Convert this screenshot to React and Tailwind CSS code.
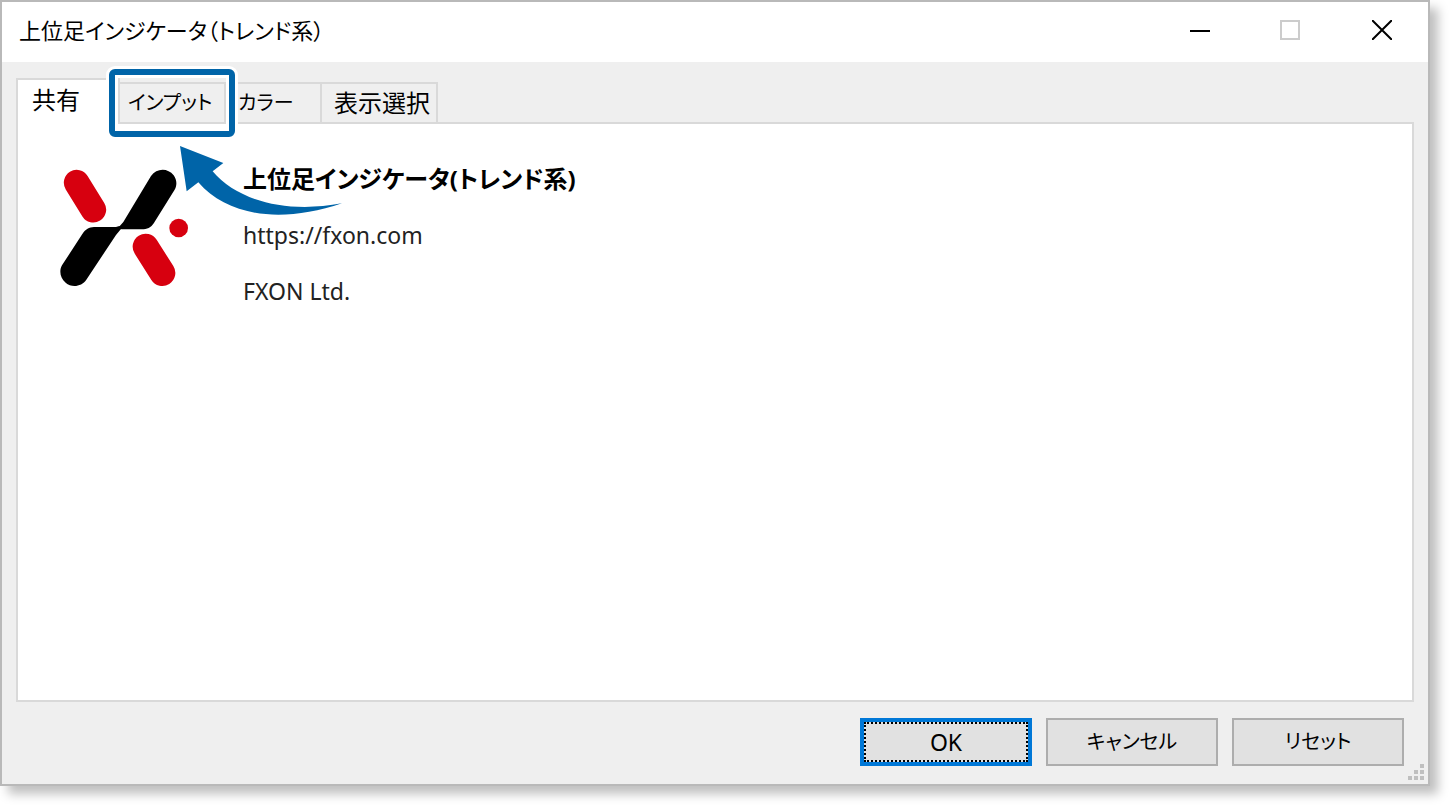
import React, { useState } from "react";
import clsx from "clsx";

const tabs = [
  { id: "common", label: "共有", style: "w-[104px] pl-[14px] text-2xl border-l-2" },
  { id: "inputs", label: "インプット", style: "w-[106px] pl-2 text-xl", highlight: true },
  { id: "colors", label: "カラー", style: "w-24 pl-3 text-xl" },
  { id: "display", label: "表示選択", style: "w-[116px] pl-3 text-2xl" },
];

const Logo = () => (
  <svg width="130" height="118" viewBox="60 117 390 354" aria-hidden="true">
    <g stroke="#d7000f" strokeLinecap="round">
      <path d="M110 158 L160 239" strokeWidth="77" />
      <path d="M317 350 L367 429" strokeWidth="78" />
    </g>
    <circle cx="416" cy="294" r="28" fill="#d7000f" />
    {/* Upper and lower arm, meeting in a thin twist in the middle */}
    <path d="M333 138 C350 114 383 113 401 136 C412 151 411 168 403 181 L345 274 C337 289 326 297 311 298 L246 298 L232 296 L250 276 Z" />
    <path d="M246 293 L228 315 L139 449 C125 470 95 474 77 458 C60 443 57 422 66 406 L127 312 C137 297 147 292 162 291 L228 291 L238 288 Z" />
  </svg>
);

// Tutorial marker: a rounded frame round the tab and the arrow that points at it
const Callout = () => (
  <>
    <span className="pointer-events-none absolute -top-[15px] -left-[11px] z-10 h-[68px] w-[126px] rounded-md border-[6px] border-[#0064a8] shadow-[0_0_0_3px_#fff,inset_0_0_0_3px_#fff]" />
    <svg
      className="pointer-events-none absolute top-[62px] left-[60px] z-10"
      width="162"
      height="69"
      viewBox="420 48 486 207"
      aria-hidden="true"
    >
      <path
        d="M420 48 L550 99 L518 124 C590 210 735 252 906 220 C725 281 564 260 475 157 L440 184 Z"
        fill="#0064a8"
      />
    </svg>
  </>
);

const TitleBar = () => (
  <header className="flex h-[60px] items-center justify-between bg-white">
    <h1 className="pl-[17px] pb-1 text-[22px]">上位足インジケータ（トレンド系）</h1>
    <div className="flex self-stretch pb-1">
      <button type="button" aria-label="最小化" className="flex w-[92px] items-center justify-center">
        <svg width="24" height="20" viewBox="0 0 24 20">
          <path d="M4 11 H24" stroke="#000" strokeWidth="2" />
        </svg>
      </button>
      <button type="button" aria-label="最大化" disabled className="flex w-[92px] items-center justify-center">
        <span className="size-5 border-2 border-[#ccc]" />
      </button>
      <button type="button" aria-label="閉じる" className="flex w-[92px] items-center justify-center">
        <svg width="20" height="20" viewBox="0 0 20 20">
          <path d="M0 0 L20 20 M20 0 L0 20" stroke="#000" strokeWidth="2" />
        </svg>
      </button>
    </div>
  </header>
);

const DialogButton = ({ children, primary }) => (
  <button
    type="button"
    className={clsx(
      "h-12 w-[172px] bg-[#e1e1e1]",
      primary ? "border-4 border-[#0078d7] text-[23px]" : "border-2 border-[#adadad] text-xl"
    )}
  >
    {primary ? (
      <span className="flex h-full items-center justify-center border-2 border-dotted border-black">
        {children}
      </span>
    ) : (
      children
    )}
  </button>
);

const App = () => {
  const [active, setActive] = useState("common");

  return (
    <div className="flex min-h-screen bg-white pr-5 pb-5 font-['Noto_Sans','Noto_Sans_CJK_JP',sans-serif] text-black [font-feature-settings:'palt']">
      <div className="relative flex flex-1 flex-col border-2 border-[#b9b9b9] bg-[#efefef] shadow-[8px_8px_10px_#00000040]">
        <TitleBar />

        <main className="flex flex-1 flex-col px-[14px] pt-4">
          <div role="tablist" className="relative -mb-[2px] flex items-end">
            {tabs.map((tab) => (
              <button
                key={tab.id}
                type="button"
                role="tab"
                id={`tab-${tab.id}`}
                aria-selected={active === tab.id}
                aria-controls="tab-panel"
                onClick={() => setActive(tab.id)}
                className={clsx(
                  "relative flex items-center border-t-2 border-r-2 border-[#d9d9d9] text-left whitespace-nowrap",
                  tab.style,
                  active === tab.id ? "h-[46px] bg-white pb-1" : "h-[42px] border-b-2 bg-[#efefef]"
                )}
              >
                {tab.label}
                {tab.highlight && <Callout />}
              </button>
            ))}
          </div>

          <section
            id="tab-panel"
            role="tabpanel"
            aria-labelledby={`tab-${active}`}
            className="flex flex-1 items-start gap-[53px] border-2 border-[#d9d9d9] bg-white pt-[45px] pl-[42px]"
          >
            <Logo />
            <div className="flex flex-col gap-9 text-[23px] leading-5">
              <h2 className="text-2xl leading-5 font-bold">上位足インジケータ(トレンド系)</h2>
              <a href="https://fxon.com" className="text-[#222]">https://fxon.com</a>
              <p className="text-[#222]">FXON Ltd.</p>
            </div>
          </section>
        </main>

        <footer className="flex justify-end gap-[14px] pt-4 pr-6 pb-[18px]">
          <DialogButton primary>OK</DialogButton>
          <DialogButton>キャンセル</DialogButton>
          <DialogButton>リセット</DialogButton>
        </footer>

        {/* Resize grip */}
        <div className="absolute right-1 bottom-1 grid grid-cols-3 gap-[2px]">
          <span className="col-start-3 size-1 bg-[#bfbfbf]" />
          <span className="col-start-2 size-1 bg-[#bfbfbf]" />
          <span className="size-1 bg-[#bfbfbf]" />
          <span className="size-1 bg-[#bfbfbf]" />
          <span className="size-1 bg-[#bfbfbf]" />
          <span className="size-1 bg-[#bfbfbf]" />
        </div>
      </div>
    </div>
  );
};

export default App;
